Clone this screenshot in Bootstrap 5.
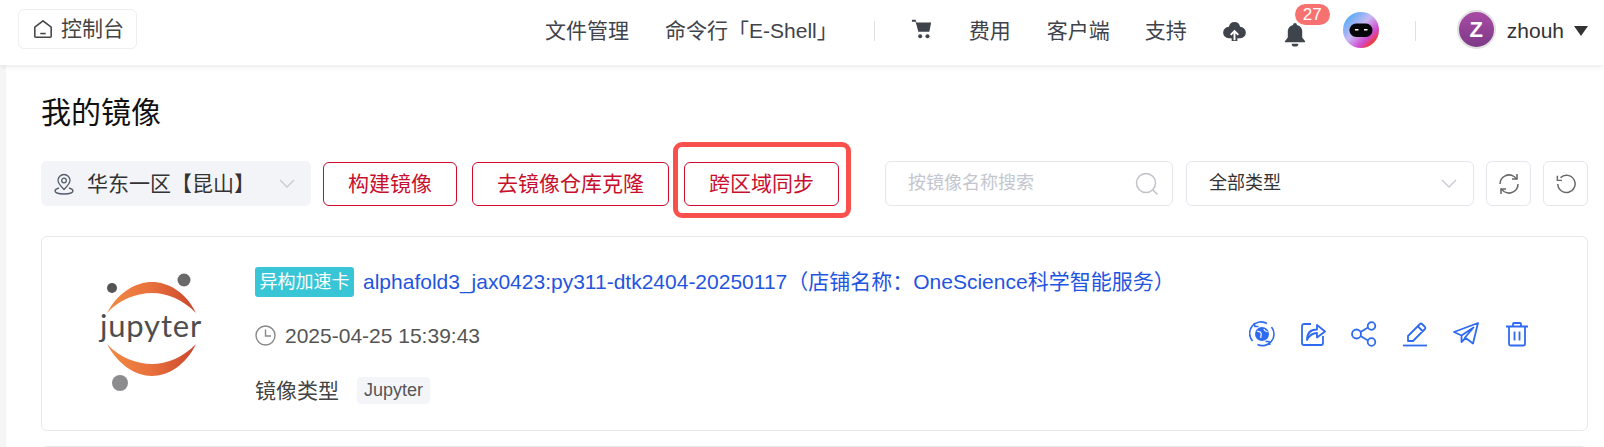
<!DOCTYPE html>
<html lang="zh-CN">
<head>
    <meta charset="UTF-8">
    <title>我的镜像</title>
    <link rel="stylesheet" href="https://cdn.jsdelivr.net/npm/bootstrap@5.3.0/dist/css/bootstrap.min.css">
    <style>
        html, body { height: 447px; overflow: hidden; }
        body { font-family: "Liberation Sans", "Noto Sans CJK SC", sans-serif; color: #333; background: #f5f5f6; }
        .top-bar { height: 65px; background: #fff; box-shadow: 0 1px 6px rgba(0,0,0,.1); padding: 9px 16px 0 18px; position: relative; z-index: 2; align-items: flex-start !important; }
        .home-btn { width: 119px; height: 40px; border: 1px solid #eceef1; border-radius: 6px; font-size: 21px; color: #444; padding-left: 14px; gap: 8px; }
        .top-menu { font-size: 21px; color: #3f434b; height: 42px; padding-top: 1px; }
        .menu-text { line-height: 42px; }
        .v-line { width: 1px; height: 20px; background: #dcdfe4; }
        .menu-a { margin-left: 36px; }
        .menu-b { margin-left: 35px; }
        .cart-ico { margin: -3px 36px 0 36px; }
        .cloud-ico { margin-top: 3px; }
        .bell-wrap { position: relative; margin-left: 36px; width: 24px; height: 26px; }
        .bell-count { position: absolute; left: 12px; top: -14px; width: 35px; height: 21px; line-height: 21px; border-radius: 11px; background: #f87171; color: #fff; font-size: 17px; text-align: center; font-weight: 500; }
        .bot-wrap { margin-left: 36px; margin-top: -2px; }
        .user-pic { width: 39px; height: 39px; border-radius: 50%; background: linear-gradient(#a94aa5, #7c3a86); border: 2px solid #e1e1e1; color: #fff; font-weight: 700; font-size: 22px; line-height: 35px; text-align: center; margin-left: 41px; margin-top: -2px; }
        .user-name { margin-left: 11px; font-size: 21px; color: #333; line-height: 42px; }
        .user-caret { width: 0; height: 0; border-left: 7.5px solid transparent; border-right: 7.5px solid transparent; border-top: 10px solid #333; margin-left: 10px; }
        .page-wrap { margin-left: 6px; background: #fff; height: 382px; padding: 0 16px 0 35px; }
        .page-title { font-size: 30px; line-height: 40px; padding-top: 28px; height: 96px; margin: 0; color: #111; font-weight: 400; box-sizing: border-box; }
        .tool-row { height: 45px; }
        .region-box { width: 270px; height: 45px; background: #f3f4f8; border-radius: 6px; padding-left: 13px; font-size: 21px; color: #333; flex: none; }
        .region-pin { margin-right: 13px; }
        .region-box .chev { margin-left: auto; margin-right: 16px; }
        .red-btn { height: 44px; border: 1px solid #cf0a2c; border-radius: 6px; background: #fff; color: #c8102e; font-size: 21px; padding: 0; flex: none; }
        .btn-one { width: 134px; margin-left: 12px; }
        .btn-two { width: 197px; margin-left: 15px; }
        .btn-wrap { position: relative; margin-left: 15px; flex: none; }
        .btn-three { width: 155px; display: block; }
        .red-mark { position: absolute; left: -11px; top: -20px; width: 178px; height: 76px; border: 5px solid #f9504e; border-radius: 9px; pointer-events: none; }
        .search-box { width: 288px; height: 45px; margin-left: 46px; border: 1px solid #e4e7ec; border-radius: 6px; padding: 0 13px 0 22px; color: #c3c6ce; font-size: 18px; flex: none; }
        .type-box { width: 288px; height: 45px; margin-left: 13px; border: 1px solid #e4e7ec; border-radius: 6px; padding: 0 16px 0 22px; color: #333; font-size: 18px; flex: none; }
        .sq-btn { width: 45px; height: 45px; border: 1px solid #e4e7ec; border-radius: 6px; margin-left: 12px; flex: none; }
        .image-card { height: 195px; margin-top: 30px; border: 1px solid #e6e8eb; border-radius: 6px; background: #fff; }
        .image-card + .image-card { margin-top: 15px; }
        .logo-col { width: 213px; flex: none; }
        .info-col { padding-top: 29px; }
        .hetero-tag { background: #38c6d6; color: #fff; font-size: 18px; width: 99px; height: 30px; line-height: 30px; border-radius: 3px; text-align: center; flex: none; }
        .img-link { color: #1f55e0; font-size: 21px; margin-left: 9px; text-decoration: none; white-space: nowrap; }
        .date-row { margin-top: 23px; font-size: 21px; color: #555; height: 30px; gap: 9px; }
        .type-row { margin-top: 24px; font-size: 21px; color: #444; gap: 18px; }
        .type-chip { background: #f4f5f9; border-radius: 4px; font-size: 18px; color: #555; height: 27px; line-height: 27px; padding: 0 7px; }
        .act-col { margin-left: auto; margin-right: 57px; margin-top: 84px; gap: 25px; height: 26px; }
    </style>
</head>
<body>
<div class="top-bar d-flex align-items-center">
    <div class="home-btn d-flex align-items-center">
        <svg width="20" height="20" viewBox="0 0 22 22" fill="none" stroke="#444" stroke-width="1.7" stroke-linejoin="round"><path d="M2 9 11 2l9 7v10a1 1 0 0 1-1 1H3a1 1 0 0 1-1-1z"/><path d="M8 16h6"/></svg>
        <span>控制台</span>
    </div>
    <div class="top-menu d-flex align-items-center ms-auto">
        <span class="menu-text">文件管理</span>
        <span class="menu-text menu-a">命令行「E-Shell」</span>
        <div class="v-line menu-a"></div>
        <svg class="cart-ico" width="22" height="22" viewBox="0 0 22 24" fill="#3f434b"><path d="M0 2h4l1 3h16l-2 10H7L4 4H0z"/><circle cx="9" cy="20" r="2.200"/><circle cx="17" cy="20" r="2.200"/></svg>
        <span class="menu-text">费用</span>
        <span class="menu-text menu-a">客户端</span>
        <span class="menu-text menu-b">支持</span>
        <svg class="menu-b cloud-ico" width="25" height="21" viewBox="0 0 24 22"><path fill="#3f434b" d="M12 0a6 6 0 0 1 5.800 5 6 6 0 0 1 .2 12h-3v3H9v-3H6A6 6 0 0 1 6.200 5 6 6 0 0 1 12 0z"/><path fill="none" stroke="#fff" stroke-width="2" d="M12 19v-9M8 13.500 12 9.500l4 4"/></svg>
        <div class="bell-wrap">
            <svg width="24" height="25" viewBox="0 0 24 26" fill="#3f434b"><path d="M12 1a2 2 0 0 1 2 2 7.500 7.500 0 0 1 5.500 7.500V16l3 4v1H1.500v-1l3-4v-5.500A7.500 7.500 0 0 1 10 3a2 2 0 0 1 2-2z"/><path d="M8.500 22.500h7a3.500 3 0 0 1-7 0z"/></svg>
            <span class="bell-count">27</span>
        </div>
        <div class="bot-wrap">
            <svg width="36" height="36" viewBox="0 0 36 36">
                <defs>
                    <linearGradient id="botLeft" x1="0" y1="0" x2="1" y2="1"><stop offset="0" stop-color="#29a8f8"/><stop offset=".45" stop-color="#c9b8f2"/><stop offset=".7" stop-color="#d14bd0"/><stop offset=".87" stop-color="#f5381f"/><stop offset="1" stop-color="#f6e8da"/></linearGradient>
                </defs>
                <circle cx="18" cy="18" r="18" fill="url(#botLeft)"/>
                <rect x="6.500" y="11.500" width="23" height="13.500" rx="6.700" fill="#05050a"/>
                <rect x="12" y="17" width="3.500" height="1.500" fill="#fff"/><rect x="21" y="17" width="3.500" height="1.500" fill="#fff"/>
            </svg>
        </div>
        <div class="v-line menu-a"></div>
        <div class="user-pic">Z</div>
        <span class="user-name">zhouh</span>
        <div class="user-caret"></div>
    </div>
</div>

<div class="page-wrap">
    <h1 class="page-title">我的镜像</h1>
    <div class="tool-row d-flex align-items-center">
        <div class="region-box d-flex align-items-center">
            <svg class="region-pin" width="20" height="22" viewBox="0 0 20 22" fill="none" stroke="#555c6a" stroke-width="1.3"><path d="M10 16.500C6 12.500 4 10 4 7.500a6 6 0 0 1 12 0c0 2.500-2 5-6 9z"/><circle cx="10" cy="7.500" r="2.300"/><path d="M5 15c-2.500.7-4 1.800-4 3 0 1.700 4 3 9 3s9-1.300 9-3c0-1.200-1.500-2.300-4-3"/></svg>
            <span>华东一区【昆山】</span>
            <svg class="chev" width="16" height="10" viewBox="0 0 16 10" fill="none" stroke="#c8cbd1" stroke-width="1.400"><path d="m1 1 7 7 7-7"/></svg>
        </div>
        <button type="button" class="btn red-btn btn-one">构建镜像</button>
        <button type="button" class="btn red-btn btn-two">去镜像仓库克隆</button>
        <div class="btn-wrap">
            <button type="button" class="btn red-btn btn-three">跨区域同步</button>
            <div class="red-mark"></div>
        </div>
        <div class="search-box d-flex align-items-center justify-content-between">
            <span>按镜像名称搜索</span>
            <svg width="24" height="24" viewBox="0 0 24 24" fill="none" stroke="#bfc2c8" stroke-width="1.500"><circle cx="11" cy="11" r="9.500"/><path d="m18 18 4.500 4.500"/></svg>
        </div>
        <div class="type-box d-flex align-items-center justify-content-between">
            <span>全部类型</span>
            <svg width="16" height="10" viewBox="0 0 16 10" fill="none" stroke="#c8cbd1" stroke-width="1.400"><path d="m1 1 7 7 7-7"/></svg>
        </div>
        <div class="sq-btn d-flex align-items-center justify-content-center">
            <svg width="20" height="24" viewBox="0 0 20 24" fill="none" stroke="#666" stroke-width="1.500"><path d="M1 12a9 9 0 0 1 14-7.500L18 7M19 12a9 9 0 0 1-14 7.500L2 17"/><path d="M18 2v5h-5M2 22v-5h5"/></svg>
        </div>
        <div class="sq-btn d-flex align-items-center justify-content-center">
            <svg width="20" height="24" viewBox="0 0 22 24" fill="none" stroke="#666" stroke-width="1.600"><path d="M5 5a9.500 9.500 0 1 1-3 7"/><path d="M1.500 3v5h5"/></svg>
        </div>
    </div>

    <div class="image-card d-flex">
        <div class="logo-col">
            <svg width="213" height="193" viewBox="0 0 213 193">
                <defs>
                    <linearGradient id="jupArc" x1="0" y1="0" x2="1" y2="0"><stop offset="0" stop-color="#f08a45"/><stop offset=".5" stop-color="#e8703c"/><stop offset="1" stop-color="#c9452c"/></linearGradient>
                </defs>
                <path fill="url(#jupArc)" d="M65 76C76 55 94 45 110 45s34 10 44 31C140 62 125 56 110 56S78 62 65 76z"/>
                <path fill="url(#jupArc)" d="M65 107C76 128 94 139 110 139s34-11 44-32C140 121 125 127 110 127S78 121 65 107z"/>
                <circle cx="70" cy="51" r="5" fill="#555"/>
                <circle cx="142" cy="43" r="6.500" fill="#696969"/>
                <circle cx="78" cy="146" r="8" fill="#8c8c8e"/>
                <text x="109" y="100" text-anchor="middle" font-family="Lato, sans-serif" font-size="31" letter-spacing=".8" fill="#4e4e4e">jupyter</text>
            </svg>
        </div>
        <div class="info-col">
            <div class="d-flex align-items-center">
                <span class="hetero-tag">异构加速卡</span>
                <a class="img-link" href="#">alphafold3_jax0423:py311-dtk2404-20250117（店铺名称：OneScience科学智能服务）</a>
            </div>
            <div class="date-row d-flex align-items-center">
                <svg width="21" height="21" viewBox="0 0 21 21" fill="none" stroke="#888" stroke-width="1.400"><circle cx="10.500" cy="10.500" r="9.500"/><path d="M10.500 4.500v6.500h5.500"/></svg>
                <span>2025-04-25 15:39:43</span>
            </div>
            <div class="type-row d-flex align-items-center">
                <span>镜像类型</span>
                <span class="type-chip">Jupyter</span>
            </div>
        </div>
        <div class="act-col d-flex align-items-center">
            <svg width="26" height="26" viewBox="0 0 26 26" fill="none" stroke="#2f6bf0" stroke-width="1.600"><path d="M3.500 20A11.500 11.500 0 0 1 18 2.500M22.500 6a11.500 11.500 0 0 1-14 17.500"/><path d="m5 2 1 3.500h3.500M21 24l-1-3.500h-3.500"/><circle cx="13" cy="13" r="7" fill="#2f6bf0" stroke="none"/><path stroke="#fff" stroke-width="1.200" d="M8 10c2 1 3 0 4 2s-1 3 0 5M15 8c0 2 2 2 3.500 3"/></svg>
            <svg width="26" height="26" viewBox="0 0 26 26" fill="none" stroke="#2f6bf0" stroke-width="1.800" stroke-linejoin="round"><path d="M11 3H4a2 2 0 0 0-2 2v17a2 2 0 0 0 2 2h17a2 2 0 0 0 2-2v-7"/><path d="M7 19c0-7 4-10.500 10-10.500V4l8 6.500-8 6V12c-4.500 0-7.500 2-10 7z"/></svg>
            <svg width="26" height="26" viewBox="0 0 26 26" fill="none" stroke="#2f6bf0" stroke-width="1.800"><circle cx="5.500" cy="13" r="4.500"/><circle cx="20.500" cy="5" r="3.800"/><circle cx="20.500" cy="21" r="3.800"/><path d="m9.500 11 7.500-4.500M9.500 15l7.500 4.500"/></svg>
            <svg width="26" height="26" viewBox="0 0 26 26" fill="none" stroke="#2f6bf0" stroke-width="1.800" stroke-linejoin="round"><path d="M6 20v-5L18 3a1.500 1.500 0 0 1 2 0l3 3a1.500 1.500 0 0 1 0 2L11 20zM16 5.500l5 5"/><path d="M1 24.500h24" stroke-width="1.800"/></svg>
            <svg width="26" height="26" viewBox="0 0 26 26" fill="none" stroke="#2f6bf0" stroke-width="1.800" stroke-linejoin="round"><path d="M25 2 1 11l7.500 3.500 12-8-8.500 10 8 6zM8.500 14.500V21l4-4"/></svg>
            <svg width="26" height="26" viewBox="0 0 26 26" fill="none" stroke="#2f6bf0" stroke-width="1.800" stroke-linejoin="round"><path d="M2 5.500h22M9 5.500V3a1 1 0 0 1 1-1h6a1 1 0 0 1 1 1v2.500M5 5.500V23a1.500 1.500 0 0 0 1.500 1.500h13A1.500 1.500 0 0 0 21 23V5.500M10.500 10.500v9M15.500 10.500v9"/></svg>
        </div>
    </div>
    <div class="image-card"></div>
</div>
<script src="https://cdn.jsdelivr.net/npm/bootstrap@5.3.0/dist/js/bootstrap.bundle.min.js"></script>
</body>
</html>
